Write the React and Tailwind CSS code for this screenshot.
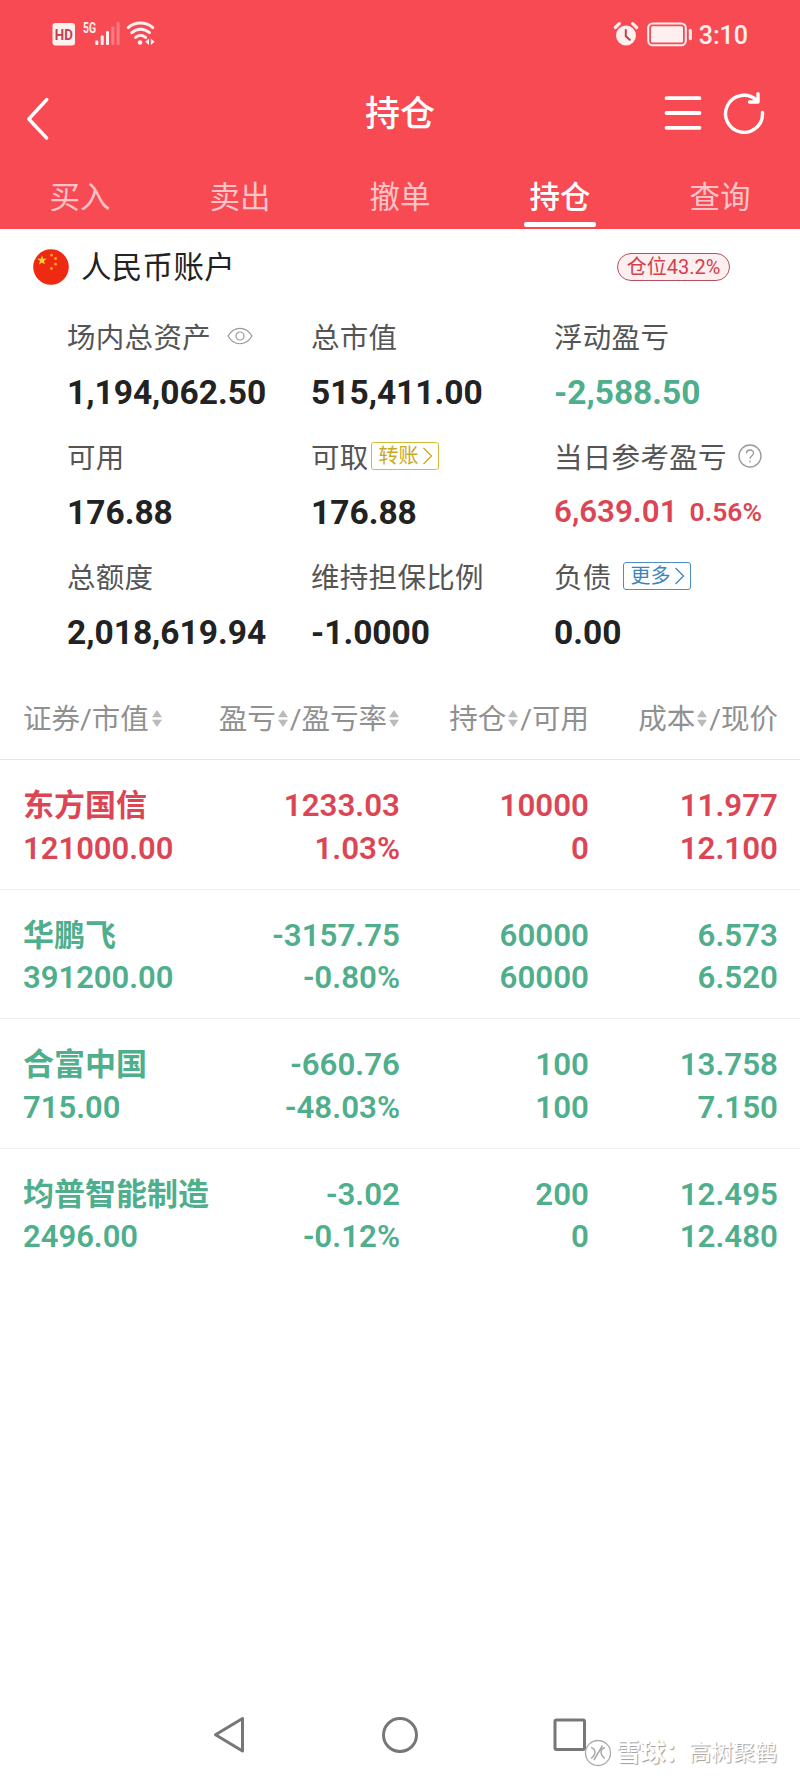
const tabs = ['买入', '卖出', '撤单', '持仓', '查询'];

const holdings = [
  { name: '东方国信', value: '121000.00', profit: '1233.03', rate: '1.03%', amount: '10000', usable: '0', cost: '11.977', price: '12.100', up: true },
  { name: '华鹏飞', value: '391200.00', profit: '-3157.75', rate: '-0.80%', amount: '60000', usable: '60000', cost: '6.573', price: '6.520' },
  { name: '合富中国', value: '715.00', profit: '-660.76', rate: '-48.03%', amount: '100', usable: '100', cost: '13.758', price: '7.150' },
  { name: '均普智能制造', value: '2496.00', profit: '-3.02', rate: '-0.12%', amount: '200', usable: '0', cost: '12.495', price: '12.480' },
];

function StatusBar() {
  return (
    <div className="flex h-[68px] items-center justify-between pr-[52px] pl-[52px]">
      <svg width="104" height="28" viewBox="0 0 104 28" fill="none">
        <rect x="0.5" y="3" width="22.5" height="22.5" rx="3" fill="#fff0f0" />
        <text x="11.8" y="19.5" textAnchor="middle" fontSize="15" fontWeight="700" fontFamily="Roboto, sans-serif" textLength="18" lengthAdjust="spacingAndGlyphs" fill="#c0414c">HD</text>
        <text x="31" y="13" fontSize="14" fontWeight="700" fontFamily="Roboto, sans-serif" textLength="13" lengthAdjust="spacingAndGlyphs" fill="#fff0f0">5G</text>
        <g fill="#fff0f0">
          <rect x="43.3" y="20.5" width="3" height="4.5" rx="1" />
          <rect x="48.7" y="15.5" width="3" height="9.5" rx="1" />
          <rect x="54" y="11" width="3" height="14" rx="1" />
          <rect x="59.3" y="6.5" width="3" height="18.5" rx="1" opacity="0.3" />
          <rect x="64.6" y="2" width="3" height="23" rx="1" opacity="0.3" />
        </g>
        <g stroke="#fff0f0" strokeWidth="3" strokeLinecap="round">
          <path d="M76.2 7.600c7-6 17.600-6 24.600 0" />
          <path d="M79.800 12.700c5.200-4.600 12.400-4.600 17.600 0" />
          <path d="M83.600 17.400c3-2.600 7-2.600 10 0" />
        </g>
        <circle cx="88" cy="22.500" r="2.300" fill="#fff0f0" />
        <path d="M97 18.500v6.500l-3.800-3.200zM98.800 18.500v6.500l3.800-3.200z" fill="#fff0f0" />
      </svg>
      <div className="flex items-center gap-[8px]">
        <svg width="26" height="26" viewBox="0 0 26 26">
          <circle cx="13" cy="14.500" r="10" fill="#fff0f0" />
          <path d="M2.300 6.500l4-3.800M23.700 6.500l-4-3.800" stroke="#fff0f0" strokeWidth="3.200" strokeLinecap="round" />
          <path d="M12.800 9v6.200l4 3.600" fill="none" stroke="#b8434d" strokeWidth="2" strokeLinecap="round" />
        </svg>
        <svg width="46" height="26" viewBox="0 0 46 26">
          <rect x="1.200" y="2.500" width="37.600" height="21.800" rx="4.500" fill="none" stroke="#fff0f0" strokeWidth="2" />
          <rect x="4" y="5.300" width="32" height="16.200" rx="1.500" fill="#fff0f0" />
          <rect x="41.800" y="7.700" width="3" height="11.500" rx="1.500" fill="#fff0f0" />
        </svg>
        <span className="-ml-[2px] pt-[3px] text-[25px] leading-[34px] font-medium text-[#fff0f0]">3:10</span>
      </div>
    </div>
  );
}

function Header() {
  return (
    <header className="h-[229px] bg-[#f84a52] text-white">
      <StatusBar />
      <div className="grid h-[96px] grid-cols-[1fr_auto_1fr] items-center">
        <svg className="mt-[6px] ml-[26px]" width="24" height="44" viewBox="0 0 24 44" fill="none" stroke="currentColor" strokeWidth="3.400" strokeLinecap="round" strokeLinejoin="round">
          <path d="M20.800 2.500L2.800 22l17.800 19" />
        </svg>
        <h1 className="-mt-[2px] text-[35px] leading-[48px] font-[450]">持仓</h1>
        <div className="flex items-center justify-end gap-[21px] pr-[35px] pb-[6px]">
          <svg width="38" height="36" viewBox="0 0 38 36" stroke="currentColor" strokeWidth="3.800" strokeLinecap="round">
            <path d="M2.500 3.200h33M2.500 18h33M2.500 32.800h33" />
          </svg>
          <svg width="42" height="42" viewBox="0 0 42 42" fill="none" stroke="currentColor" strokeWidth="3.400" strokeLinecap="round" strokeLinejoin="round">
            <path d="M39.500 20.500A18.500 18.500 0 1 1 34 8.600" />
            <path d="M35 1.800v8.200h-8.500" />
          </svg>
        </div>
      </div>
      <nav className="grid h-[65px] grid-cols-5">
        {tabs.map((tab) => {
          const active = tab === '持仓';
          return (
            <div key={tab} className="flex flex-col items-center">
              <span className={`mt-[13px] text-[30.500px] leading-[42px] ${active ? 'font-[450] text-white' : 'text-[#ffc3c8]'}`}>{tab}</span>
              {active && <span className="mt-[3px] h-[5px] w-[72px] rounded-[2px] bg-white" />}
            </div>
          );
        })}
      </nav>
    </header>
  );
}

function Flag() {
  return (
    <svg width="36" height="36" viewBox="0 0 36 36">
      <circle cx="18" cy="18" r="17.800" fill="#ee2a12" />
      <path fill="#fbd62b" d="M9 6.200l1.200 3.500 3.700.1-3 2.200 1.100 3.600-3-2.100-3 2.100 1.100-3.600-3-2.200 3.700-.1z" />
      <g fill="#f5a623">
        <circle cx="18.500" cy="6.200" r="1.400" />
        <circle cx="22.500" cy="9.500" r="1.400" />
        <circle cx="22.500" cy="15.200" r="1.400" />
        <circle cx="18.500" cy="19.500" r="1.400" />
      </g>
    </svg>
  );
}

function SmallTag({ children, className }) {
  return (
    <span className={`mb-[5px] flex h-[28px] w-[68px] items-center rounded-[3px] border pl-[7px] text-[20px] leading-[26px] tracking-normal ${className}`}>
      {children}
      <svg className="ml-[3px] shrink-0" width="11" height="18" viewBox="0 0 11 18" fill="none" stroke="currentColor" strokeWidth="1.300">
        <path d="M1.500 1l8 8-8 8" />
      </svg>
    </span>
  );
}

function Metric({ label, value, extra, children, className = 'text-[#222]' }) {
  return (
    <div className="h-[120px]">
      <div className="flex h-[53px] items-center text-[28.500px] leading-[53px] tracking-[0.300px] text-[#555]">
        {label}
        {children}
      </div>
      <div className={`flex items-center whitespace-nowrap ${extra ? 'h-[54px] text-[31.300px] font-semibold' : 'h-[56px] text-[33.500px] font-bold'} ${className}`}>
        {value}
        {extra && <span className="ml-[12px] text-[26.500px]">{extra}</span>}
      </div>
    </div>
  );
}

function Account() {
  return (
    <section>
      <div className="flex h-[83px] items-center pr-[70px] pb-[7px] pl-[33px]">
        <Flag />
        <h2 className="ml-[12px] pt-[1px] text-[30.500px] leading-[42px] tracking-[0.300px] text-[#222]">人民币账户</h2>
        <span className="ml-auto flex h-[28px] w-[113px] items-center justify-center rounded-full border border-[#b3525c] bg-[#fdeef0] text-[20px] leading-[26px] text-[#d43f4c]">仓位43.2%</span>
      </div>
      <div className="grid grid-cols-[244px_243px_1fr] pl-[67px]">
        <Metric label="场内总资产" value="1,194,062.50">
          <svg className="mb-[5px] ml-[16px]" width="26" height="18" viewBox="0 0 26 18" fill="none" stroke="#999" strokeWidth="1.200">
            <path d="M1 9C7-1.300 19-1.300 25 9 19 19.300 7 19.300 1 9z" />
            <circle cx="13" cy="9" r="4" />
          </svg>
        </Metric>
        <Metric label="总市值" value="515,411.00" />
        <Metric label="浮动盈亏" value="-2,588.50" className="text-[#4fae8b]" />
        <Metric label="可用" value="176.88" />
        <Metric label="可取" value="176.88">
          <SmallTag className="ml-[2px] border-[#d2bd3a] text-[#cba91f]">转账</SmallTag>
        </Metric>
        <Metric label="当日参考盈亏" value="6,639.01" extra="0.56%" className="text-[#dc4654]">
          <svg className="mb-[5px] ml-[11px]" width="24" height="24" viewBox="0 0 24 24" fill="none" stroke="#999" strokeWidth="1.300">
            <circle cx="12" cy="12" r="11" />
            <path d="M8.500 9.500c0-4.600 7-4.600 7-.3 0 2.600-3.500 2.600-3.500 5.600" />
            <path d="M12 16.500v2" />
          </svg>
        </Metric>
        <Metric label="总额度" value="2,018,619.94" />
        <Metric label="维持担保比例" value="-1.0000" />
        <Metric label="负债" value="0.00">
          <SmallTag className="ml-[11px] border-[#4f8fbf] text-[#3a85c0]">更多</SmallTag>
        </Metric>
      </div>
    </section>
  );
}

function Sort() {
  return (
    <svg className="mb-[4px] shrink-0" width="10" height="17" viewBox="0 0 10 17" fill="#bbb">
      <path d="M5 0l5 7.300H0zM5 17l5-7.300H0z" />
    </svg>
  );
}

function Pair({ top, bottom, className = 'text-right text-[31.300px]' }) {
  return (
    <div className={`leading-[42.500px] ${className}`}>
      <p>{top}</p>
      <p>{bottom}</p>
    </div>
  );
}

function Holdings() {
  return (
    <section>
      <div className="grid h-[88px] grid-cols-[200px_176px_190px_189px] border-b border-[#e6e6e6] pt-[10px] pl-[23px] text-[28.500px] whitespace-nowrap text-[#909090]">
        <div className="flex items-center gap-[3px]">证券/市值<Sort /></div>
        <div className="flex items-center justify-end gap-[2px]">盈亏<Sort />/盈亏率<Sort /></div>
        <div className="flex items-center justify-end gap-[2px]">持仓<Sort />/可用</div>
        <div className="flex items-center justify-end gap-[2px]">成本<Sort />/现价</div>
      </div>
      <div className="divide-y divide-[#f0f0f0]">
        {holdings.map((item) => (
          <div key={item.name} className={`grid h-[129.600px] grid-cols-[200px_177px_189px_189px] pt-[25px] pl-[23px] font-semibold ${item.up ? 'text-[#dc4654]' : 'text-[#4fae8b]'}`}>
            <Pair top={item.name} bottom={item.value} className="text-[31px] whitespace-nowrap" />
            <Pair top={item.profit} bottom={item.rate} />
            <Pair top={item.amount} bottom={item.usable} />
            <Pair top={item.cost} bottom={item.price} />
          </div>
        ))}
      </div>
    </section>
  );
}

function NavBar() {
  return (
    <div className="mt-auto flex h-[86px] items-center justify-center gap-[134px]">
      <svg width="36" height="40" viewBox="0 0 36 40" fill="none" stroke="#777" strokeWidth="3" strokeLinejoin="round">
        <path d="M31.500 3.500v32.500L4.500 19.700z" />
      </svg>
      <svg width="38" height="38" viewBox="0 0 38 38" fill="none" stroke="#777" strokeWidth="3">
        <circle cx="19" cy="19" r="16.500" />
      </svg>
      <svg width="36" height="38" viewBox="0 0 36 38" fill="none" stroke="#777" strokeWidth="3">
        <rect x="2" y="4" width="29.500" height="29.500" rx="1.500" />
      </svg>
    </div>
  );
}

function Watermark() {
  return (
    <div className="absolute right-[23px] bottom-[9px] flex items-center whitespace-nowrap text-white [text-shadow:1px_1px_1px_#999]">
      <svg width="28" height="28" viewBox="0 0 28 28" fill="none">
        <circle cx="14" cy="14" r="12.500" fill="#fff" stroke="#aaa" strokeWidth="1.300" />
        <path d="M7 8.500c5 1.500 5.500 7 0 11M21 8.500c-5 1.500-5.500 7 0 11M10 21L18.500 6.500" stroke="#aaa" strokeWidth="1.500" />
      </svg>
      <span className="ml-[4px] text-[25px] leading-[32px] font-bold tracking-[-0.700px]">雪球：</span>
      <span className="text-[22px] leading-[32px]">高树聚鹤</span>
    </div>
  );
}

export default function App() {
  return (
    <main className="relative flex h-[1778px] w-[800px] flex-col overflow-hidden bg-white font-[Roboto,'Noto_Sans_CJK_SC',sans-serif]">
      <Header />
      <Account />
      <Holdings />
      <NavBar />
      <Watermark />
    </main>
  );
}
